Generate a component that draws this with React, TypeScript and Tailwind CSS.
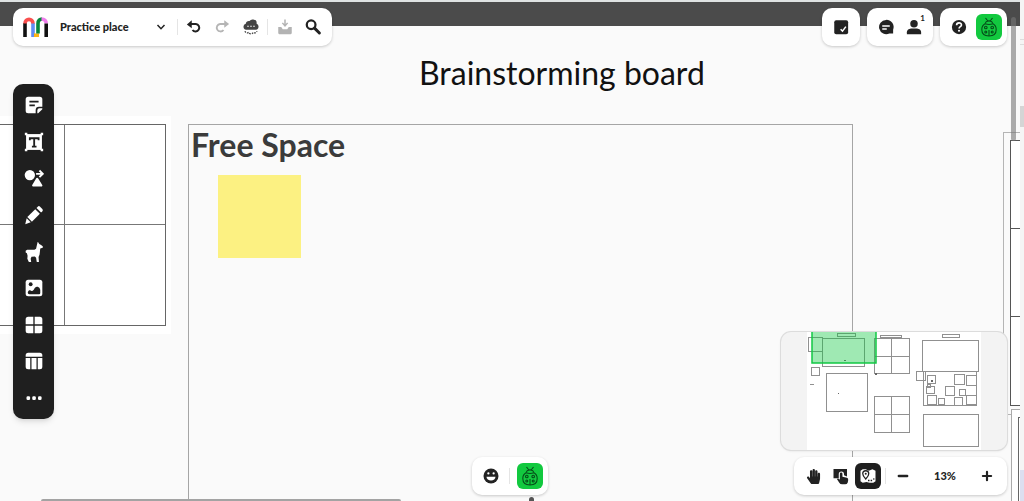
import type { ReactNode } from "react";
import { FaHandPaper } from "react-icons/fa";

export default function App() {
  return (
    <div className="flex h-screen overflow-hidden bg-white font-['Lato',sans-serif] text-[#222]">
      <main className="relative min-w-0 flex-1 overflow-hidden bg-[#fafafa]">
        <Board />
        <Scrollbars />

        <div className="relative flex h-full flex-col justify-between px-[13px] pt-2 pb-[6px]">
          <Header />
          <Footer />
        </div>

        <div className="absolute inset-y-0 left-[13px] flex items-center">
          <Toolbar />
        </div>
      </main>
      <WindowEdge />
    </div>
  );
}

/* Header */
function Header() {
  return (
    <header className="flex items-center justify-between">
      <Panel>
        <a href="#home" aria-label="Home" className="ml-[10px]">
          <Logo />
        </a>
        <button className="ml-3 flex h-8 w-[106px] items-center justify-between text-[11px] font-black whitespace-nowrap">
          Practice place
          <svg viewBox="0 0 10 8" className="h-2 w-[10px]" fill="none" stroke="currentColor" strokeWidth="1.500">
            <path d="M1.500 2 5 5.700 8.500 2" />
          </svg>
        </button>
        <Divider className="ml-[11px]" />
        <IconButton label="Undo" className="ml-[2px]">
          <path d="M8 8h6.500a5 5 0 1 1-4.500 8" fill="none" stroke="currentColor" strokeWidth="2.600" />
          <path d="M2.500 8.500 9 3v10.500z" />
        </IconButton>
        <IconButton label="Redo" className="text-[#b5b5b5]">
          <path d="M16.500 8h-7a5 5 0 1 0 4.500 8" fill="none" stroke="currentColor" strokeWidth="2.400" />
          <path d="m21.500 8-6.500-5v10z" />
        </IconButton>
        <IconButton label="Private mode" className="ml-px text-[#444]">
          <path d="M5.500 15.500a4 4 0 0 1-3.500-4 4 4 0 0 1 3-4 4 4 0 0 1 5-3.500 5 5 0 0 1 5-2 5 5 0 0 1 4.500 5.500 4 4 0 0 1 2.500 4 4 4 0 0 1-3.500 4z" />
          <path d="M7 11h2m2 0h2m2 0h2" stroke="#fff" strokeWidth="1.600" />
          <path d="M4 17.500a3 3 0 0 0 4.500 2 4 4 0 0 0 6.500 0 3.500 3.500 0 0 0 5-2" fill="none" stroke="currentColor" strokeWidth="1.600" strokeDasharray="2.200 1.300" />
        </IconButton>
        <Divider className="ml-[2px]" />
        <IconButton label="Save" className="ml-[3px] text-[#b3b3b3]">
          <path d="M3 12h4l2 3h6l2-3h4v8a1.500 1.500 0 0 1-1.500 1.500h-15A1.500 1.500 0 0 1 3 20z" />
          <path d="M12 2v8m-3.500-3.500L12 10.500l3.500-4" fill="none" stroke="currentColor" strokeWidth="2" />
        </IconButton>
        <IconButton label="Search" className="mr-[5px]">
          <circle cx="9.500" cy="9" r="5.800" fill="none" stroke="currentColor" strokeWidth="3" />
          <path d="m14 13.500 6.500 6.500" stroke="currentColor" strokeWidth="4" strokeLinecap="round" />
        </IconButton>
      </Panel>

      <div className="flex gap-[7px]">
        <Panel className="px-[5px]">
          <IconButton label="Tasks">
            <rect x="3" y="3" width="18.500" height="18.500" rx="2.500" />
            <path d="m11.500 15 2.500 2.500 4.500-6" fill="none" stroke="#fff" strokeWidth="2" />
          </IconButton>
        </Panel>
        <Panel className="px-[5px]">
          <IconButton label="Comments">
            <path d="M12 2.500a9.500 9.500 0 1 0 4.500 18h5v-5A9.500 9.500 0 0 0 12 2.500z" />
            <path d="M7 10.500h10M7 14.500h6" stroke="#fff" strokeWidth="2" />
          </IconButton>
          <button aria-label="Collaborators" className="relative flex size-7 items-center justify-center">
            <Glyph>
              <circle cx="12" cy="7.500" r="5" />
              <path d="M2.500 21.500v-2.500c0-4 4-5 6.500-5h6c2.500 0 6.500 1 6.500 5v2.500z" />
            </Glyph>
            <span className="absolute top-0 right-[3px] text-[8px] leading-[10px] font-bold">1</span>
          </button>
        </Panel>
        <Panel className="px-[5px]">
          <IconButton label="Help">
            <circle cx="12" cy="12" r="9.500" />
            <path d="M8.800 9.500c0-4 6.500-4 6.500-.3 0 2.400-3.200 2.200-3.200 4.800" fill="none" stroke="#fff" strokeWidth="2.200" />
            <circle cx="12" cy="17" r="1.400" fill="#fff" />
          </IconButton>
          <Avatar />
        </Panel>
      </div>
    </header>
  );
}

/* Left toolbar */
function Toolbar() {
  return (
    <nav aria-label="Tools" className="mt-[2px] flex h-[335px] w-[41px] flex-col rounded-[10px] bg-[#1f1f1f] py-[3px] shadow-md">
      <Tool label="Sticky note">
        <path d="M5 2h14a3 3 0 0 1 3 3v9h-4a4 4 0 0 0-4 4v4H5a3 3 0 0 1-3-3V5a3 3 0 0 1 3-3z" />
        <path d="M22 16v1l-5 5h-1v-3.500a2.500 2.500 0 0 1 2.500-2.500z" />
        <path d="M6.500 8h11M6.500 12.500h6.500" stroke="#1f1f1f" strokeWidth="2" />
      </Tool>
      <Tool label="Text">
        <rect x="2.500" y="2.500" width="19" height="19" />
        <path d="M1 1h3v3H1zm19 0h3v3h-3zM1 20h3v3H1zm19 0h3v3h-3z" />
        <path d="M7 10V7.500h10.500V10M12.200 7.500v9.500M9.500 17.500h5.500" fill="none" stroke="#1f1f1f" strokeWidth="2.200" />
      </Tool>
      <Tool label="Shapes and connectors">
        <circle cx="7" cy="8.500" r="6.200" />
        <path d="m15.800 13 5 8H11z" stroke="currentColor" strokeWidth="2.600" strokeLinejoin="round" />
        <path d="M14.500 7H22m-3.500-4L22.500 7l-4 4" fill="none" stroke="currentColor" strokeWidth="2.200" />
      </Tool>
      <Tool label="Drawing">
        <path d="m13.500 5 5.500 5.500-9.500 9.500L4 14.500z" />
        <path d="m15 3.500 1.500-1.500a2 2 0 0 1 2.800 0L22 4.700a2 2 0 0 1 0 2.800L20.500 9z" />
        <path d="m3.200 16 4.800 4.800L1.500 23z" />
      </Tool>
      <Tool label="Icons">
        <path d="M15.500 3.500 16.500-.5l1.800 3 1.700.8 2.500 1.700v2l-3 .7-.8 7.300-1.200 3 .5 7h-2.500l-1-6-1.500-1.500-4 .2-1 2.500.8 4.800H6.300L4 20l.3-3.500L3.500 13.500 2 12.500v-2l1.800-1.300h8.700l2-1z" />
      </Tool>
      <Tool label="Images">
        <rect x="2" y="2" width="20" height="20" rx="3" />
        <circle cx="8" cy="7.500" r="2.300" fill="#1f1f1f" />
        <path d="M4.500 17.500c1-4 3.500-2.500 4.500-2 3 1.200 3-5 6.500-5 3 0 4 3 4 4v3.500q0 1.500-1.500 1.500H6.500q-2 0-2-2z" fill="#1f1f1f" />
      </Tool>
      <Tool label="Frameworks">
        <path d="M5 2h6.200v9.200H2V5a3 3 0 0 1 3-3zM12.800 2H19a3 3 0 0 1 3 3v6.200h-9.200zM2 12.800h9.200V22H5a3 3 0 0 1-3-3zM12.800 12.800H22V19a3 3 0 0 1-3 3h-6.200z" />
      </Tool>
      <Tool label="Tables">
        <path d="M5 2h14a3 3 0 0 1 3 3v2H2V5a3 3 0 0 1 3-3zM2 8.500h5.500V22H5a3 3 0 0 1-3-3zM9 8.500h6V22H9zM16.500 8.500H22V19a3 3 0 0 1-3 3h-2.500z" />
      </Tool>
      <Tool label="More tools">
        <rect x="3" y="10" width="4.300" height="4.300" rx="1.500" />
        <rect x="9.900" y="10" width="4.300" height="4.300" rx="1.500" />
        <rect x="16.800" y="10" width="4.300" height="4.300" rx="1.500" />
      </Tool>
    </nav>
  );
}

/* Footer */
function Footer() {
  return (
    <footer className="grid grid-cols-[1fr_auto_1fr] items-end">
      <div />
      <Panel className="px-[5px]">
        <IconButton label="Reactions">
          <circle cx="12" cy="12" r="10" />
          <circle cx="8.500" cy="8.500" r="1.500" fill="#fff" />
          <circle cx="15.500" cy="8.500" r="1.500" fill="#fff" />
          <path d="M6 13h12a6 5 0 0 1-12 0z" fill="#fff" />
        </IconButton>
        <Divider className="mx-1" />
        <Avatar />
      </Panel>

      <div className="flex flex-col items-end gap-[7px]">
        <Minimap />
        <Panel className="px-[5px]">
          <button aria-label="Move" className="flex size-7 items-center justify-center">
            <FaHandPaper className="size-[15px]" />
          </button>
          <IconButton label="Select">
            <path d="M2 2.500h18v10l-4-1.500V9.500a3.500 3.500 0 0 0-7 0V15H2z" />
            <path d="M10.500 16V9a1.700 1.700 0 0 1 3.400 0v4l6 1.200q2 .5 1.700 3L21 20.500q-1 2.500-3.500 2.500h-4q-2.500 0-4-2.500L6.500 16q1.500-1.500 4 1z" />
          </IconButton>
          <button aria-label="Toggle map" aria-pressed="true" className="flex size-[26px] items-center justify-center rounded-md bg-[#1f1f1f] text-white">
            <Glyph>
              <path d="M5 3h4l4 2 5-2 4 2v14l-3 2h-5l-4-1-5 1-3-2V5z" />
              <path d="M9 5a4 4 0 0 1 4 4c0 3-4 7-4 7s-4-4-4-7a4 4 0 0 1 4-4zM12 18h2m1.500 0h2m1.500-2h1.500" fill="#fff" stroke="#1f1f1f" strokeWidth="1.700" />
              <circle cx="9" cy="9" r="1.300" fill="#1f1f1f" />
            </Glyph>
          </button>
          <Divider className="ml-1" />
          <IconButton label="Zoom out" className="ml-[3px]">
            <path d="M6.500 12h11" stroke="currentColor" strokeWidth="3.400" strokeLinecap="round" />
          </IconButton>
          <button className="h-7 w-14 text-center text-[11px] font-black">13%</button>
          <IconButton label="Zoom in" className="mr-px">
            <path d="M6.500 12h11M12 6.500v11" stroke="currentColor" strokeWidth="2.900" strokeLinecap="round" />
          </IconButton>
        </Panel>
      </div>
    </footer>
  );
}

const mapFrames = [
  [56.5, 1.5, 18, 3],
  [41.5, 6.5, 42, 28],
  [27.5, 5.5, 14, 14],
  [30.5, 35.5, 8, 8],
  [45.5, 41.5, 41, 38],
  [93.5, 6.5, 35, 35],
  [93.5, 64.5, 35, 36],
  [99.5, 3.5, 21, 2],
  [161.5, 2.5, 17, 3],
  [141.5, 8.5, 56, 31],
  [142.5, 39.5, 53, 34],
  [142.5, 82.5, 55, 32],
  [135.5, 39.5, 9, 9],
  [146.5, 43.5, 8, 8],
  [145.5, 54.5, 8, 7],
  [146.5, 52.5, 3, 3],
  [146.5, 63.5, 9, 9],
  [157.5, 66.5, 6, 6],
  [164.5, 54.5, 9, 9],
  [173.5, 42.5, 10, 10],
  [178.5, 57.5, 6, 6],
  [185.5, 43.5, 10, 10],
  [173.5, 65.5, 8, 8],
  [185.5, 63.5, 10, 9],
];

function Minimap() {
  return (
    <div className="overflow-hidden rounded-[10px] bg-[#f3f3f3] shadow-sm ring-1 ring-[#dcdcdc]">
      <svg viewBox="0 0 226 118" className="h-[118px] w-[226px]" role="img" aria-label="Board map">
        <rect x="26" width="174" height="118" fill="#fff" />
        <g fill="none" stroke="#909090">
          {mapFrames.map(([x, y, w, h], i) => (
            <rect key={i} x={x} y={y} width={w} height={h} />
          ))}
          <path d="M110.500 6.500v35M93.500 24.500h35M110.500 64.500v36M93.500 82.500h35M29 52.500h4" />
        </g>
        <path d="M57 61h1v1h-1zM63 28h2v1h-2zM94 41h2v2h-2zM150 48h2v2h-2z" fill="#666" />
        <rect x="31" y="0" width="64" height="31" fill="#10c840" fillOpacity=".4" />
        <path d="M31 0v31h64V0" fill="none" stroke="#12c744" strokeWidth="1.500" />
      </svg>
    </div>
  );
}

/* Board content: every item sits at its own place on the free canvas */
function Board() {
  return (
    <div className="absolute inset-0">
      <div className="absolute inset-x-0 top-0 h-[26px] border-t-2 border-[#dfe3e3] bg-[#4b4b4b]" />

      <div className="absolute top-[116px] left-0 h-[218px] w-[171px] bg-white" />
      <div className="absolute top-[124px] -left-[37px] grid h-[202px] w-[203px] grid-cols-2 grid-rows-2 border border-[#666]">
        <div className="border-r border-b border-[#777]" />
        <div className="border-b border-[#777]" />
        <div className="border-r border-[#777]" />
        <div />
      </div>

      <h1 className="absolute top-[53px] left-[419px] text-[32px] leading-10 whitespace-nowrap text-[#111]">Brainstorming board</h1>

      <section className="absolute top-[124px] left-[188px] h-[400px] w-[665px] border border-[#a5a5a5]">
        <h2 className="pl-[2px] text-[32px] leading-10 font-bold text-[#3b3b3b]">Free Space</h2>
        <div className="mt-[10px] ml-[29px] size-[83px] bg-[#fcf182]" />
      </section>

      <div className="absolute top-[132px] left-[1003px] h-[283px] w-10 border border-[#b5b5b5]" />
      <div className="absolute top-[140px] left-[1010px] grid h-[266px] w-10 grid-rows-3 divide-y divide-[#555] border border-[#555] bg-white">
        <div />
        <div />
        <div />
      </div>
      <div className="absolute top-[409px] left-[1011px] h-[120px] w-10 border border-[#aaa] bg-white" />
      <div className="absolute top-[417px] left-[1018px] h-[120px] w-10 border border-[#666]" />
      <div className="absolute top-[497px] left-[529px] h-2 w-[5px] rounded-full bg-[#555]" />
    </div>
  );
}

function Scrollbars() {
  return (
    <>
      <div className="absolute top-[17px] right-1 h-[124px] w-[5px] rounded-full bg-[#777]/60" />
      <div className="absolute bottom-0 left-[41px] h-[2px] w-[360px] rounded-t-sm bg-[#a3a3a3]" />
    </>
  );
}

function WindowEdge() {
  return (
    <aside className="flex w-1 flex-col bg-[#f5f5f5]">
      <div className="mt-[39px] h-[6px] border-y border-[#ddd]" />
      <div className="mt-[61px] h-[21px] bg-[#d5d5d5]" />
      <div className="mt-auto h-[31px] bg-[#dcdff0]" />
    </aside>
  );
}

/* Shared pieces */
function Panel({ className = "", children }: { className?: string; children: ReactNode }) {
  return <div className={`flex h-[38px] items-center rounded-[10px] bg-white shadow-[0_1px_3px_#0003] ${className}`}>{children}</div>;
}

function Divider({ className = "" }: { className?: string }) {
  return <div className={`h-4 w-px bg-[#e5e5e5] ${className}`} />;
}

function Glyph({ children }: { children: ReactNode }) {
  return (
    <svg viewBox="0 0 24 24" className="size-[18px]" fill="currentColor" aria-hidden="true">
      {children}
    </svg>
  );
}

function IconButton({ label, className = "", children }: { label: string; className?: string; children: ReactNode }) {
  return (
    <button aria-label={label} className={`flex size-7 items-center justify-center ${className}`}>
      <Glyph>{children}</Glyph>
    </button>
  );
}

function Tool({ label, children }: { label: string; children: ReactNode }) {
  return (
    <button aria-label={label} className="flex flex-1 items-center justify-center text-white">
      <svg viewBox="0 0 24 24" className="size-5" fill="currentColor" aria-hidden="true">
        {children}
      </svg>
    </button>
  );
}

function Avatar() {
  return (
    <button aria-label="Your profile" className="ml-[3px] size-[26px] rounded-md bg-[#12c93f] text-[#064d19]">
      <svg viewBox="0 0 26 26" className="size-full" fill="none" stroke="currentColor" strokeWidth="1.100" aria-hidden="true">
        <path d="M9.500 4c1.500 2.500 2.500 3 3.500 3s2-.5 3.500-3M9.500 9.500c0-3.300 7-3.300 7 0" />
        <path d="M9 9.800c-2.800 1.700-3.200 4-3.200 5.700 0 4.500 3.200 6.500 7.200 6.500s7.200-2 7.200-6.500c0-1.700-.4-4-3.200-5.700-2.500.8-5.500.8-8 0z" />
        <path d="M13 16v6" />
        <circle cx="9.800" cy="13.500" r="1.300" />
        <circle cx="16.200" cy="13.500" r="1.300" />
        <circle cx="9.800" cy="18" r="1" />
        <circle cx="16.200" cy="18" r="1" />
      </svg>
    </button>
  );
}

function Logo() {
  return (
    <svg viewBox="0 0 25 20" className="h-5 w-[25px]" fill="none" strokeWidth="3.600" aria-hidden="true">
      <path d="M2 6v14" stroke="#111" />
      <path d="M10 6v14" stroke="#628ef5" />
      <path d="M2 6.500C2 1 10 1 10 6.500" stroke="#f9504f" />
      <path d="M11 18.200h5" stroke="#fcb316" />
      <path d="M15 16.500v-10c0-3 2-4.500 4-4.500" stroke="#07863c" />
      <path d="M18.500 2c3 0 4.700 2 4.700 4.500" stroke="#ef7cec" />
      <path d="M23.200 6.500V20" stroke="#111" />
    </svg>
  );
}
